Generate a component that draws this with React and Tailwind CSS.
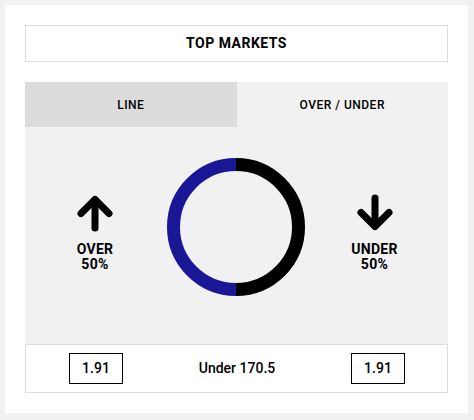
import React from "react";

const font = { fontFamily: "Roboto, 'Liberation Sans', sans-serif" };

const Arrow = ({ down }) => (
  <svg width="40" height="38" viewBox="0 0 40 38" fill="none">
    <g
      stroke="#000"
      strokeWidth="7"
      strokeLinecap="round"
      strokeLinejoin="round"
      transform={down ? "rotate(180 20 19)" : undefined}
    >
      <path d="M20 34V6" />
      <path d="M6 19.5L20 5.5L34 19.5" />
    </g>
  </svg>
);

const Donut = () => {
  const r = 62.5;
  return (
    <svg width="138" height="138" viewBox="0 0 138 138">
      <path
        d={`M69 ${69 - r} A${r} ${r} 0 0 1 69 ${69 + r}`}
        stroke="#000"
        strokeWidth="13"
        fill="none"
      />
      <path
        d={`M69 ${69 - r} A${r} ${r} 0 0 0 69 ${69 + r}`}
        stroke="#1a1796"
        strokeWidth="13"
        fill="none"
      />
    </svg>
  );
};

const Side = ({ label, down }) => (
  <div className="flex flex-col items-center">
    <Arrow down={down} />
    <div className="mt-[10px] text-[14px] font-bold leading-[15px] text-black text-center tracking-[0.3px]">
      <div>{label}</div>
      <div>50%</div>
    </div>
  </div>
);

export default function App() {
  return (
    <div className="bg-[#f1f1f1] p-[5px] w-[474px] h-[420px]" style={font}>
      <div className="bg-white px-[20px] pt-[20px] pb-[20px] w-[463px]">
        <div className="h-[37px] border border-[#dddddd] flex items-center justify-center text-[14px] font-bold tracking-[0.5px] text-black">
          TOP MARKETS
        </div>

        <div className="mt-[20px] bg-[#f1f1f1]">
          <div className="flex h-[45px] text-[12px] font-medium tracking-[0.5px] text-black">
            <div className="flex-1 bg-[#dcdcdc] flex items-center justify-center">
              LINE
            </div>
            <div className="flex-1 flex items-center justify-center">
              OVER / UNDER
            </div>
          </div>

          <div className="flex items-center pt-[31px] pb-[48px]">
            <div className="w-[142px] flex justify-center pt-[12px] pr-[2px]">
              <Side label="OVER" />
            </div>
            <Donut />
            <div className="flex-1 flex justify-center pt-[12px] pr-[4px]">
              <Side label="UNDER" down />
            </div>
          </div>
        </div>

        <div className="h-[49px] bg-white border border-[#dddddd] flex items-center justify-between pl-[43px] pr-[42px]">
          <div className="w-[54px] h-[31px] border border-black flex items-center justify-center text-[14px] font-medium text-black">
            1.91
          </div>
          <div className="text-[14px] font-medium text-black">Under 170.5</div>
          <div className="w-[54px] h-[31px] border border-black flex items-center justify-center text-[14px] font-medium text-black">
            1.91
          </div>
        </div>
      </div>
    </div>
  );
}
